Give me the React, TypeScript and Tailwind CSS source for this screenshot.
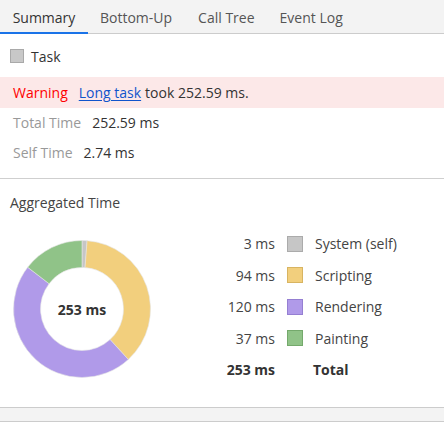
import React from "react";

const segs = [
  { v: 3, c: "#c6c6c6" },
  { v: 94, c: "#f2cf7d" },
  { v: 120, c: "#b09ae9" },
  { v: 37, c: "#90c388" },
];

function arcPath(cx: number, cy: number, ro: number, ri: number, a0: number, a1: number) {
  const p = (r: number, a: number) => [cx + r * Math.sin(a), cy - r * Math.cos(a)];
  const large = a1 - a0 > Math.PI ? 1 : 0;
  const [x0, y0] = p(ro, a0);
  const [x1, y1] = p(ro, a1);
  const [x2, y2] = p(ri, a1);
  const [x3, y3] = p(ri, a0);
  return `M${x0} ${y0} A${ro} ${ro} 0 ${large} 1 ${x1} ${y1} L${x2} ${y2} A${ri} ${ri} 0 ${large} 0 ${x3} ${y3} Z`;
}

function Donut() {
  const total = segs.reduce((s, x) => s + x.v, 0);
  let a = 0;
  return (
    <div className="relative w-[140px] h-[140px]">
      <svg width="140" height="140" viewBox="0 0 140 140">
        {segs.map((s, i) => {
          const a0 = a;
          const a1 = a + (s.v / total) * Math.PI * 2;
          a = a1;
          return <path key={i} d={arcPath(70, 70, 68.5, 41.5, a0, a1)} fill={s.c} stroke="#e4e4e4" strokeWidth="0.6" />;
        })}
      </svg>
      <div className="absolute inset-0 flex items-center justify-center font-bold text-[14px] text-[#333]">253 ms</div>
    </div>
  );
}

const legend = [
  { v: "3 ms", l: "System (self)", bg: "bg-[#c6c6c6]", bd: "border-[#ababab]" },
  { v: "94 ms", l: "Scripting", bg: "bg-[#f2cf7d]", bd: "border-[#d8b461]" },
  { v: "120 ms", l: "Rendering", bg: "bg-[#b09ae9]", bd: "border-[#957fd2]" },
  { v: "37 ms", l: "Painting", bg: "bg-[#90c388]", bd: "border-[#74a96c]" },
];

export default function App() {
  return (
    <div className="w-[444px] h-[427px] bg-white text-[14px] text-[#333] overflow-hidden" style={{ fontFamily: '"Open Sans", "Noto Sans", sans-serif' }}>
      {/* tabs */}
      <div className="h-[34px] bg-[#f3f3f3] border-b border-[#cccccc] flex">
        <div className="relative w-[88px] flex items-center justify-center text-[#333] pt-[1px]">
          Summary
          <div className="absolute left-0 right-0 bottom-[-1px] h-[2px] bg-[#1a73e8]" />
        </div>
        <div className="flex items-center pl-[12px] pr-[13px] pt-[1px] text-[#555]">Bottom-Up</div>
        <div className="flex items-center px-[13px] pt-[1px] text-[#555]">Call Tree</div>
        <div className="flex items-center px-[12px] pt-[1px] text-[#555]">Event Log</div>
      </div>

      {/* task */}
      <div className="h-[43px] flex items-center pl-[10px] pt-[1px]">
        <div className="w-[14px] h-[14px] bg-[#c8c8c8] border border-[#a9a9a9]" />
        <span className="ml-[7px]">Task</span>
      </div>

      <div className="h-[31px] bg-[#fce8e8] flex items-center pl-[13px]">
        <span className="text-[#ff0000]">Warning</span>
        <span className="ml-[11px] text-[#1155cc] underline underline-offset-2">Long task</span>
        <span className="ml-[4px]">took 252.59 ms.</span>
      </div>

      <div className="h-[29px] flex items-center pl-[13px]">
        <span className="text-[#999]">Total Time</span>
        <span className="ml-[11px]">252.59 ms</span>
      </div>
      <div className="h-[31px] flex items-center pl-[13px]">
        <span className="text-[#999]">Self Time</span>
        <span className="ml-[11px]">2.74 ms</span>
      </div>

      <div className="h-[11px] border-b border-[#cfcfcf]" />

      <div className="pl-[10px] pt-[14px] text-[14px] text-[#444] leading-[19px]">Aggregated Time</div>

      <div className="flex items-start mt-[27px] h-[140px]">
        <div className="ml-[12px]">
          <Donut />
        </div>
        <div className="ml-[60px] mt-[-11px] flex flex-col">
          {legend.map((r) => (
            <div key={r.l} className="h-[31.5px] flex items-center">
              <span className="w-[63px] text-right text-[#444]">{r.v}</span>
              <div className={`ml-[12px] w-[16px] h-[16px] border ${r.bg} ${r.bd}`} />
              <span className="ml-[12px] text-[#444]">{r.l}</span>
            </div>
          ))}
          <div className="h-[31.5px] flex items-center font-bold">
            <span className="w-[63px] text-right">253 ms</span>
            <span className="ml-[38px]">Total</span>
          </div>
        </div>
      </div>

      <div className="mt-[28px] h-[15px] bg-[#f3f3f3] border-y border-[#cccccc]" />
    </div>
  );
}
